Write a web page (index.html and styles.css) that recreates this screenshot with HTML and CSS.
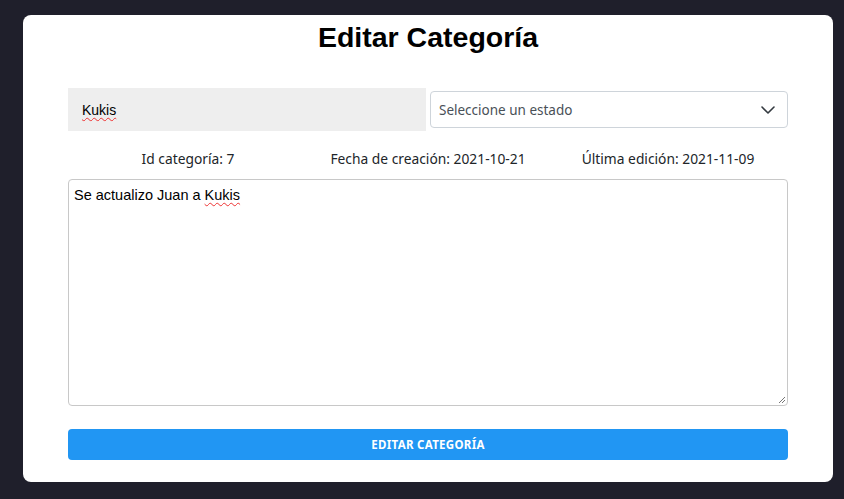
FILE: index.html
```html
<!DOCTYPE html>
<html lang="es">
<head>
<meta charset="utf-8">
<title>Editar Categoría</title>
<link rel="stylesheet" href="styles.css">
</head>
<body>
<div class="card">
  <h1 class="title">Editar Categoría</h1>
  <div class="field-row">
    <div class="name-input"><span class="spell">Kukis</span></div>
    <div class="select">
      <span>Seleccione un estado</span>
      <svg class="chev" width="14" height="8" viewBox="0 0 14 8"><path d="M1 1l6 6 6-6" fill="none" stroke="#343a40" stroke-width="1.6" stroke-linecap="round" stroke-linejoin="round"/></svg>
    </div>
  </div>
  <div class="info-row">
    <div class="info">Id categoría: 7</div>
    <div class="info">Fecha de creación: 2021-10-21</div>
    <div class="info">Última edición: 2021-11-09</div>
  </div>
  <div class="textarea">
    <span>Se actualizo Juan a <span class="spell">Kukis</span></span>
    <svg class="grip" width="8" height="8" viewBox="0 0 8 8"><path d="M7 1L1 7M7 4L4 7" stroke="#777" stroke-width="1"/></svg>
  </div>
  <div class="btn">EDITAR CATEGORÍA</div>
</div>
</body>
</html>
```
FILE: styles.css
```css
html, body {
  margin: 0;
  padding: 0;
}
body {
  background: #1f1f2b;
  width: 844px;
  height: 499px;
  overflow: hidden;
  padding-top: 15px;
  padding-left: 23px;
  box-sizing: border-box;
}
.card {
  width: 810px;
  height: 467px;
  box-sizing: border-box;
  background: #fff;
  border-radius: 8px;
  padding: 6px 45px 22px;
  display: flex;
  flex-direction: column;
}
.title {
  margin: 0;
  font-family: "Liberation Sans", Arial, sans-serif;
  font-size: 28.5px;
  font-weight: bold;
  line-height: 32px;
  text-align: center;
  color: #000;
}
.field-row {
  margin-top: 35px;
  height: 43px;
  display: flex;
  align-items: center;
  gap: 4px;
}
.name-input {
  width: 358px;
  height: 43px;
  background: #eeeeee;
  box-sizing: border-box;
  padding-left: 14px;
  display: flex;
  align-items: center;
  font-family: "Liberation Sans", Arial, sans-serif;
  font-size: 14px;
  color: #000;
}
.spell {
  text-decoration: underline wavy #e33;
  text-decoration-thickness: 1px;
  text-underline-offset: 2px;
}
.select {
  flex: 1;
  height: 37px;
  box-sizing: border-box;
  border: 1px solid #ced4da;
  border-radius: 4px;
  padding: 0 12px 0 8px;
  display: flex;
  align-items: center;
  justify-content: space-between;
  font-family: "Noto Sans", "Open Sans", sans-serif;
  font-size: 13.5px;
  color: #495057;
}
.info-row {
  margin-top: 19px;
  display: grid;
  grid-template-columns: 1fr 1fr 1fr;
  font-family: "Noto Sans", "Open Sans", sans-serif;
  font-size: 13.8px;
  line-height: 18px;
  color: #212529;
  text-align: center;
}
.textarea {
  position: relative;
  margin-top: 11px;
  height: 227px;
  box-sizing: border-box;
  border: 1px solid #c8c8c8;
  border-radius: 4px;
  padding: 7px 5px;
  font-family: "Liberation Sans", Arial, sans-serif;
  font-size: 14.5px;
  color: #000;
}
.grip {
  position: absolute;
  right: 1px;
  bottom: 1px;
}
.btn {
  margin-top: 23px;
  height: 31px;
  background: #2196f3;
  border-radius: 4px;
  color: #fff;
  display: flex;
  align-items: center;
  justify-content: center;
  font-family: "Noto Sans", "Open Sans", sans-serif;
  font-size: 11.5px;
  font-weight: bold;
  letter-spacing: 0.3px;
}
```
